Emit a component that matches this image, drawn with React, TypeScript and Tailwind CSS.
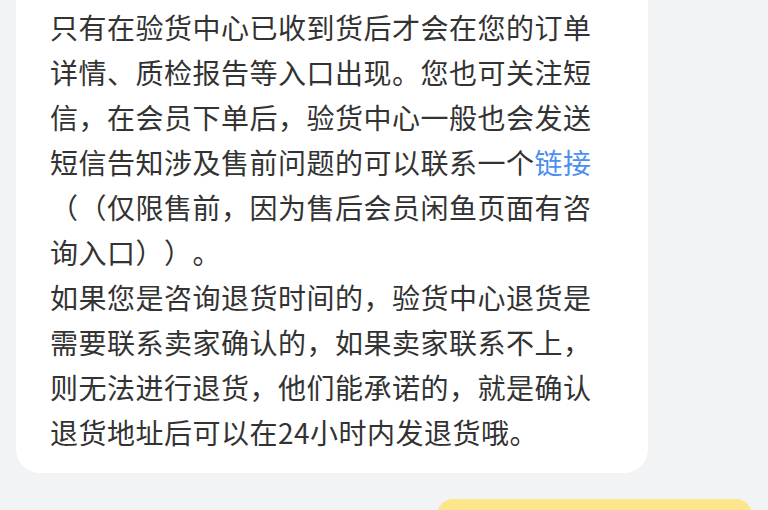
const lines: React.ReactNode[] = [
  '验货中心会根据商品情况进行检测，检测结果',
  '只有在验货中心已收到货后才会在您的订单',
  '详情、质检报告等入口出现。您也可关注短',
  '信，在会员下单后，验货中心一般也会发送',
  <>
    短信告知涉及售前问题的可以联系一个<span className="text-[#4d8ff0]">链接</span>
  </>,
  '（（仅限售前，因为售后会员闲鱼页面有咨',
  '询入口））。',
  '如果您是咨询退货时间的，验货中心退货是',
  '需要联系卖家确认的，如果卖家联系不上，',
  '则无法进行退货，他们能承诺的，就是确认',
  '退货地址后可以在24小时内发退货哦。',
];

export default function App() {
  return (
    <div
      className="h-[510px] w-full overflow-hidden bg-[#f2f3f5]"
      style={{ fontFamily: '"Noto Sans CJK SC", "Noto Sans", sans-serif' }}
    >
      <div className="flex flex-col">
        {/* bot reply bubble */}
        <div className="mt-[-56px] ml-4 w-[632px] rounded-[24px] bg-white pt-[16px] pb-[18px] pl-[34px] pr-4">
          {lines.map((line, i) => (
            <div
              key={i}
              className="h-[45px] whitespace-nowrap text-[28px] leading-[45px] tracking-[0.5px] text-[#333333] [text-spacing-trim:space-all]"
            >
              {line}
            </div>
          ))}
        </div>

        {/* user message bubble, peeking at the bottom */}
        <div className="mt-[26px] mr-4 flex justify-end">
          <div className="h-[60px] w-[315px] rounded-[16px] bg-[#fce58a]" />
        </div>
      </div>
    </div>
  );
}
